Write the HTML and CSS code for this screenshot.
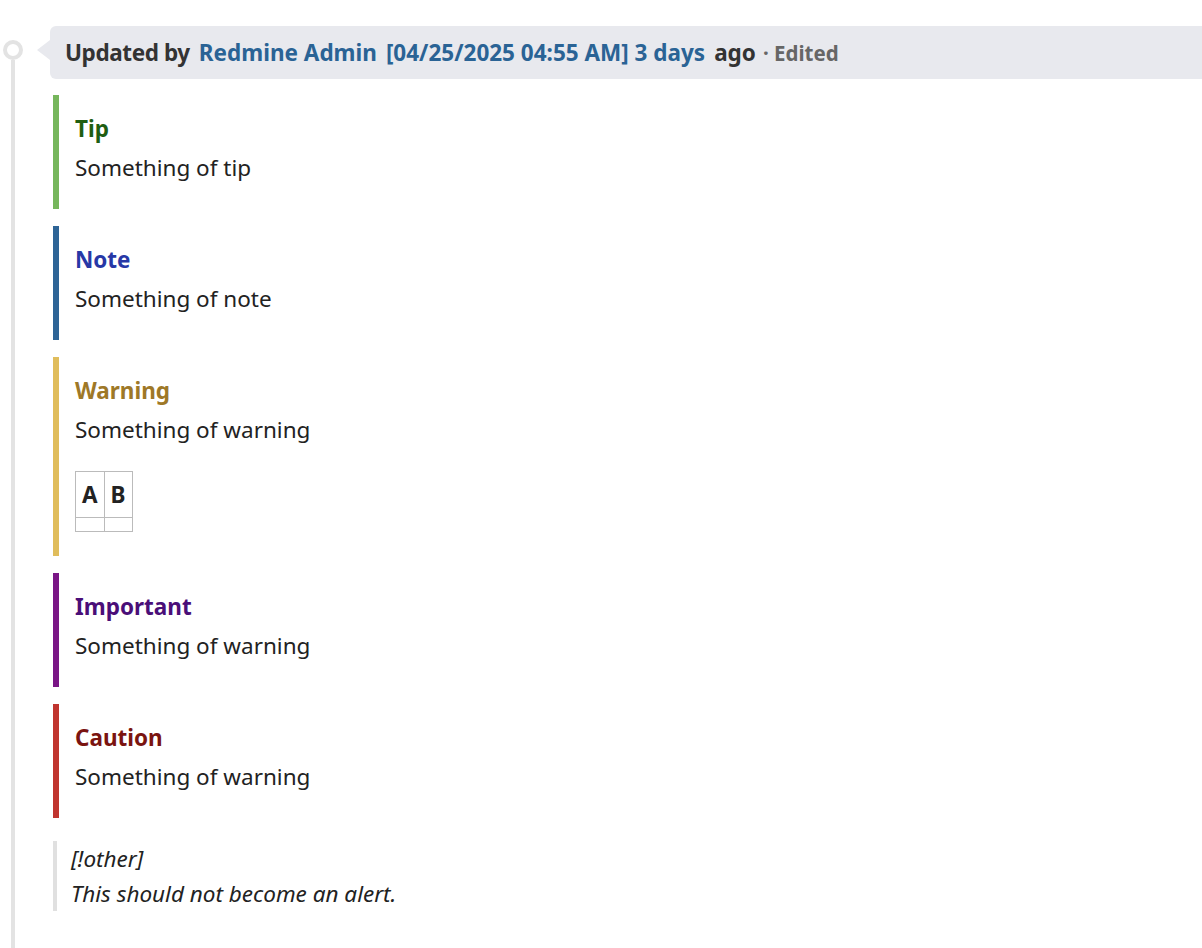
FILE: index.html
```html
<!DOCTYPE html>
<html lang="en">
<head>
<meta charset="utf-8">
<title>Journal</title>
<link rel="stylesheet" href="styles.css">
</head>
<body>
<div class="journal">
  <div class="rail"><span class="dot"></span><span class="line"></span></div>
  <div class="main">
    <div class="head">
      <h4 class="head-box">
        <span class="by">Updated by</span>
        <a class="link" href="#">Redmine Admin</a>
        <a class="link gap" href="#">[04/25/2025 04:55 AM] 3 days</a>
        <span class="gap">ago</span>
        <span class="edited">· Edited</span>
      </h4>
    </div>
    <div class="wiki">
      <div class="alert alert-tip">
        <p class="alert-title">Tip</p>
        <p>Something of tip</p>
      </div>
      <div class="alert alert-note">
        <p class="alert-title">Note</p>
        <p>Something of note</p>
      </div>
      <div class="alert alert-warning">
        <p class="alert-title">Warning</p>
        <p>Something of warning</p>
        <table class="grid">
          <thead><tr><th>A</th><th>B</th></tr></thead>
          <tbody><tr><td></td><td></td></tr></tbody>
        </table>
      </div>
      <div class="alert alert-important">
        <p class="alert-title">Important</p>
        <p>Something of warning</p>
      </div>
      <div class="alert alert-caution">
        <p class="alert-title">Caution</p>
        <p>Something of warning</p>
      </div>
      <blockquote class="quote">
        <p>[!other]<br>This should not become an alert.</p>
      </blockquote>
    </div>
  </div>
</div>
</body>
</html>
```
FILE: styles.css
```css
html, body {
  margin: 0;
  padding: 0;
  background: #fff;
}
body {
  font-family: "Noto Sans", "DejaVu Sans", sans-serif;
  font-size: 22.5px;
  color: #222;
}
.journal {
  display: flex;
  min-height: 948px;
}
.rail {
  width: 26px;
  display: flex;
  flex-direction: column;
  align-items: center;
}
.dot {
  margin-top: 40px;
  width: 20px;
  height: 20px;
  box-sizing: border-box;
  border: 4px solid #e3e3e3;
  border-radius: 50%;
}
.line {
  flex: 1;
  width: 4px;
  background: #e3e3e3;
}
.main {
  flex: 1;
  margin-left: 11px;
  padding-top: 26px;
}
.head {
  position: relative;
  margin-left: 13px;
}
.head::before {
  content: "";
  position: absolute;
  left: -13px;
  top: 14px;
  border-top: 10px solid transparent;
  border-bottom: 10px solid transparent;
  border-right: 13px solid #e8e9ee;
}
.head-box {
  margin: 0;
  height: 53px;
  box-sizing: border-box;
  padding: 0 15px;
  display: flex;
  align-items: center;
  gap: 9px;
  background: #e8e9ee;
  border-radius: 6px 0 0 6px;
  font-size: 22.5px;
  font-weight: bold;
  color: #333;
  white-space: nowrap;
}
.by {
  letter-spacing: -0.4px;
}
.link {
  color: #2a6395;
  text-decoration: none;
}
.gap {
  margin-left: 0;
}
.edited {
  font-size: 20.5px;
  color: #666;
  margin-left: -2px;
}
.wiki {
  margin-left: 16px;
  padding-top: 16px;
  line-height: 35px;
}
.wiki p {
  margin: 0 0 24px;
}
.alert {
  display: flow-root;
  border-left: 6px solid;
  padding: 16px 0 0 16px;
  margin-bottom: 17px;
}
.alert p.alert-title {
  font-weight: bold;
  margin-bottom: 4px;
}
.alert-tip { border-left-color: #76b65c; }
.alert-tip .alert-title { color: #1f5e12; }
.alert-note { border-left-color: #2e6496; }
.alert-note .alert-title { color: #2738a6; }
.alert-warning { border-left-color: #e0bd5c; }
.alert-warning .alert-title { color: #9e7827; }
.alert-important { border-left-color: #7a1686; }
.alert-important .alert-title { color: #4a0e78; }
.alert-caution { border-left-color: #c0352f; }
.alert-caution .alert-title { color: #7a1410; }
.grid {
  border-collapse: collapse;
  margin-bottom: 24px;
}
.grid th {
  border: 1px solid #bbb;
  padding: 5px 6px 5px;
  line-height: 35px;
  font-weight: bold;
}
.grid td {
  border: 1px solid #bbb;
  padding: 6px 6px 7px;
}
.quote {
  margin: 23px 0 0;
  border-left: 4px solid #e0e0e0;
  padding: 0 0 0 14px;
  font-style: italic;
}
.quote p {
  margin: 0;
}
```
